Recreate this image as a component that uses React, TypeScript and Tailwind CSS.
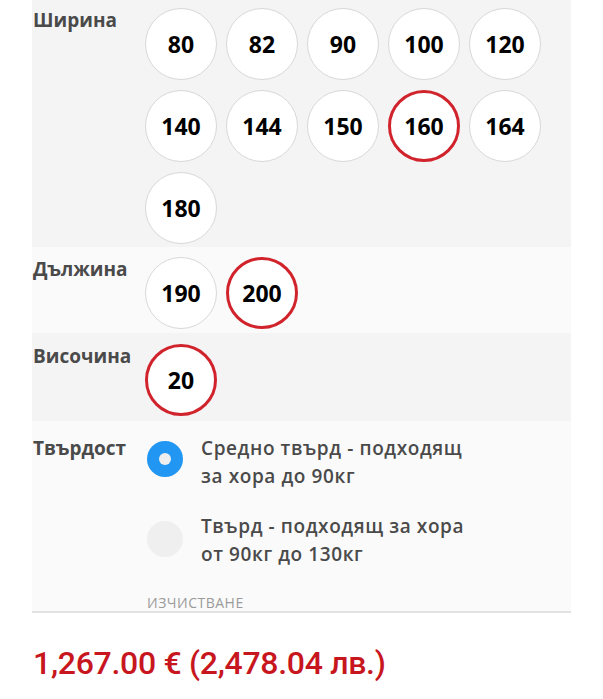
const font = { fontFamily: '"Open Sans", "Noto Sans", sans-serif' };

const widths = ["80", "82", "90", "100", "120", "140", "144", "150", "160", "164", "180"];

const Pill = ({ value, active }: { value: string; active?: boolean }) => (
  <div
    className={
      "w-[72px] h-[72px] shrink-0 rounded-full bg-white flex items-center justify-center text-[23px] font-bold text-black " +
      (active ? "border-[3px] border-[#d1232c]" : "border border-[#d8d8d8]")
    }
  >
    {value}
  </div>
);

const Label = ({ children, lh = "leading-[24px]" }: { children: string; lh?: string }) => (
  <div className={"w-[113px] shrink-0 pl-px text-[19px] font-bold text-[#4a4a4a] " + lh}>{children}</div>
);

const Radio = ({ checked, lines }: { checked?: boolean; lines: string[] }) => (
  <div className="flex items-start pl-[2px]">
    {checked ? (
      <div className="mt-[7px] w-[36px] h-[36px] shrink-0 rounded-full bg-[#2196f3] flex items-center justify-center">
        <div className="w-[12px] h-[12px] rounded-full bg-[#eeeeee]" />
      </div>
    ) : (
      <div className="mt-[9px] w-[36px] h-[36px] shrink-0 rounded-full bg-[#efefef]" />
    )}
    <div className="ml-[18px] text-[19px] leading-[28px] font-semibold tracking-[0.6px] text-[#4a4a4a]">
      {lines.map((l) => (
        <div key={l}>{l}</div>
      ))}
    </div>
  </div>
);

export default function App() {
  return (
    <div className="w-[603px] min-h-[699px] bg-white px-[32px]" style={font}>
      {/* Ширина */}
      <div className="flex bg-[#f4f4f4] pt-[8px] pb-[3px]">
        <Label>Ширина</Label>
        <div className="grid grid-cols-[repeat(5,72px)] gap-x-[9px] gap-y-[10px]">
          {widths.map((w) => (
            <Pill key={w} value={w} active={w === "160"} />
          ))}
        </div>
      </div>

      {/* Дължина */}
      <div className="flex bg-[#fafafa] pt-[10px] pb-[4px]">
        <Label>Дължина</Label>
        <div className="flex gap-[9px]">
          <Pill value="190" />
          <Pill value="200" active />
        </div>
      </div>

      {/* Височина */}
      <div className="flex bg-[#f4f4f4] pt-[11px] pb-[5px]">
        <Label>Височина</Label>
        <div className="flex">
          <Pill value="20" active />
        </div>
      </div>

      {/* Твърдост */}
      <div className="flex bg-[#fafafa] pt-[13px] border-b-2 border-[#e2e2e2]">
        <Label lh="leading-[28px]">Твърдост</Label>
        <div className="flex flex-col">
          <Radio checked lines={["Средно твърд - подходящ", "за хора до 90кг"]} />
          <div className="mt-[22px]">
            <Radio lines={["Твърд - подходящ за хора", "от 90кг до 130кг"]} />
          </div>
          <div className="mt-[27px] pl-[2px] text-[14px] leading-[16px] uppercase tracking-[0.5px] text-[#9a9a9a]">
            Изчистване
          </div>
        </div>
      </div>

      <div
        className="mt-[30px] pl-px text-[32px] leading-[40px] font-medium tracking-[-0.3px] text-[#c8161e]"
        style={{ fontFamily: 'Roboto, "Noto Sans", sans-serif' }}
      >
        1,267.00 € (2,478.04 лв.)
      </div>
    </div>
  );
}
